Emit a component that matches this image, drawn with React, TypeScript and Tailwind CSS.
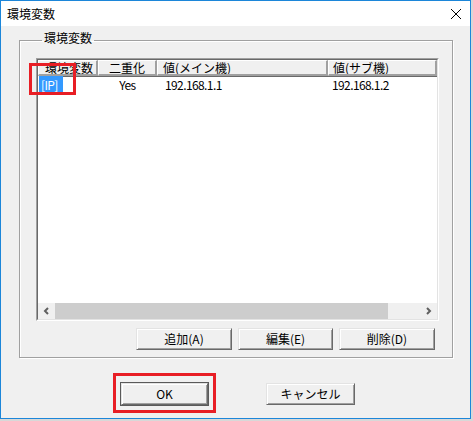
const font = "font-['Noto_Sans_CJK_JP',sans-serif]";

const HeaderCell = ({
  children,
  className = "",
}: {
  children: React.ReactNode;
  className?: string;
}) => (
  <div
    className={`h-full flex items-center border-t border-l border-white border-r-2 border-b-2 border-r-[#a0a0a0] border-b-[#a0a0a0] shadow-[1px_1px_0_#696969] overflow-hidden whitespace-nowrap ${className}`}
  >
    {children}
  </div>
);

const WinButton = ({
  label,
  width,
  isDefault,
}: {
  label: string;
  width: string;
  isDefault?: boolean;
}) => (
  <button
    className={`${width} h-[22px] bg-[#f0f0f0] text-[12px] leading-[14px] text-black border border-t-[#e3e3e3] border-l-[#e3e3e3] border-r-[#696969] border-b-[#696969] shadow-[inset_1px_1px_0_#fff,inset_-1px_-1px_0_#a0a0a0] ${
      isDefault ? "outline outline-1 outline-[#5a5a5a]" : ""
    }`}
  >
    {label}
  </button>
);

const Chevron = ({ dir }: { dir: "left" | "right" }) => (
  <svg width="7" height="8" viewBox="0 0 7 8">
    <path
      d={dir === "left" ? "M5 1 L2 4 L5 7" : "M2 1 L5 4 L2 7"}
      fill="none"
      stroke="#606060"
      strokeWidth="2"
    />
  </svg>
);

export default function App() {
  return (
    <div className={`relative w-[473px] h-[421px] bg-[#d8d8d8] ${font}`}>
      <div className="w-[471px] h-[419px] border border-[#1c86d9] flex flex-col">
        {/* title bar */}
        <div className="h-[25px] bg-white flex items-center justify-between pl-[6px] pr-[9px]">
          <span className="text-[12px] leading-[14px] text-black">環境変数</span>
          <svg width="10" height="10" viewBox="0 0 10 10">
            <path d="M0 0 L10 10 M10 0 L0 10" stroke="#000" strokeWidth="1" />
          </svg>
        </div>

        {/* client */}
        <div className="flex-1 bg-[#f0f0f0] flex flex-col">
          <fieldset className="mt-[5px] ml-[18px] w-[434px] h-[327px] border border-[#a0a0a0] shadow-[inset_1px_1px_0_#fff,1px_1px_0_#fff] pl-[16px] pr-[13px] pt-[8px] pb-[7px] flex flex-col">
            <legend className="ml-[6px] px-[2px] pb-[5px] text-[12px] leading-[14px] text-black">
              環境変数
            </legend>

            {/* list view */}
            <div className="w-[403px] h-[263px] border border-[#a0a0a0] border-r-white border-b-white">
              <div className="w-full h-full border border-[#696969] border-r-[#e3e3e3] border-b-[#e3e3e3] bg-white flex flex-col overflow-hidden">
                <div className="h-[16px] flex text-[12px] leading-[14px] text-black bg-[#f0f0f0] shrink-0">
                  <HeaderCell className="w-[60px] pl-[6px]">環境変数</HeaderCell>
                  <HeaderCell className="w-[59px] justify-center">二重化</HeaderCell>
                  <HeaderCell className="w-[171px] pl-[5px]">値(メイン機)</HeaderCell>
                  <HeaderCell className="flex-1 pl-[4px]">値(サブ機)</HeaderCell>
                </div>
                <div className="h-[15px] mt-[1px] flex items-center text-[12px] leading-[14px] text-black shrink-0 tracking-[-0.6px]">
                  <div className="w-[60px] pl-[1px]">
                    <span className="bg-[#3399ff] text-white pl-[2px] pr-[5px]">[IP]</span>
                  </div>
                  <div className="w-[59px] text-center">Yes</div>
                  <div className="w-[171px] pl-[8px]">192.168.1.1</div>
                  <div className="flex-1 pl-[4px]">192.168.1.2</div>
                </div>
                <div className="flex-1" />
                {/* horizontal scrollbar */}
                <div className="h-[16px] flex bg-[#f0f0f0] shrink-0">
                  <div className="w-[17px] flex items-center justify-center">
                    <Chevron dir="left" />
                  </div>
                  <div className="w-[333px] bg-[#cdcdcd]" />
                  <div className="flex-1" />
                  <div className="w-[17px] flex items-center justify-center">
                    <Chevron dir="right" />
                  </div>
                </div>
              </div>
            </div>

            <div className="mt-[7px] pr-[4px] flex justify-end gap-[6px]">
              <WinButton label="追加(A)" width="w-[96px]" />
              <WinButton label="編集(E)" width="w-[95px]" />
              <WinButton label="削除(D)" width="w-[96px]" />
            </div>
          </fieldset>

          <div className="mt-[25px] pl-[120px] flex gap-[58px]">
            <WinButton label="OK" width="w-[87px]" isDefault />
            <WinButton label="キャンセル" width="w-[89px]" />
          </div>
        </div>
      </div>

      {/* red annotation boxes */}
      <div className="absolute left-[29px] top-[63px] w-[47px] h-[32px] border-[3px] border-[#e81e25]" />
      <div className="absolute left-[113px] top-[373px] w-[103px] h-[40px] border-[3px] border-[#e81e25]" />
    </div>
  );
}
